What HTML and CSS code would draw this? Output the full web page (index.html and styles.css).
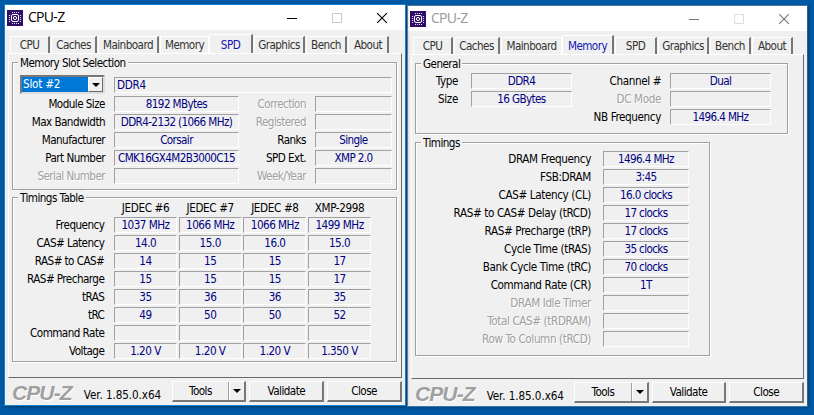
FILE: index.html
```
<!DOCTYPE html>
<html lang="en">
<head>
    <meta charset="UTF-8" />
    <meta name="viewport" content="width=device-width, initial-scale=1" />
    <title>CPU-Z</title>
    <link rel="stylesheet" href="styles.css">
</head>
<body>
    <svg width="0" height="0" class="defs">
        <symbol id="chip" viewBox="0 0 16 16">
            <rect width="16" height="16" fill="#2e0d68" />
            <path d="M5 2.5h7M5 13.5h7M2.5 5v7M13.5 5v7" stroke="#e4def0" stroke-width="1.2" stroke-dasharray="1 1" fill="none" />
            <rect x="4.5" y="4.5" width="7" height="7" rx="1.5" fill="none" stroke="#fff" />
            <circle cx="8" cy="8" r="1.6" fill="none" stroke="#fff" />
        </symbol>
        <symbol id="min" viewBox="0 0 10 10"><path d="M0 5.5h10" stroke="currentColor" /></symbol>
        <symbol id="max" viewBox="0 0 10 10"><path d="M.5 .5h9v9h-9z" stroke="currentColor" fill="none" /></symbol>
        <symbol id="close" viewBox="0 0 10 10"><path d="M0 0L10 10M10 0L0 10" stroke="currentColor" stroke-width="1.1" /></symbol>
    </svg>

    <div class="window spd-window">
        <header class="titlebar">
            <svg class="app-icon"><use href="#chip" /></svg>
            <h1>CPU-Z</h1>
            <svg class="ctl"><use href="#min" /></svg>
            <svg class="ctl off"><use href="#max" /></svg>
            <svg class="ctl"><use href="#close" /></svg>
        </header>
        <nav class="tabs">
            <span class="tab">CPU</span><span class="tab">Caches</span><span class="tab">Mainboard</span><span class="tab last-before">Memory</span><span class="tab active">SPD</span><span class="tab">Graphics</span><span class="tab">Bench</span><span class="tab">About</span>
        </nav>
        <main class="panel">
            <section class="group slot">
                <h2>Memory Slot Selection</h2>
                <div class="slot-row">
                    <div class="select"><span>Slot #2</span><i class="drop"></i></div>
                    <div class="field left">DDR4</div>
                </div>
                <div class="slot-grid">
                    <label>Module Size</label><div class="field">8192 MBytes</div><label class="off">Correction</label><div class="field"></div>
                    <label>Max Bandwidth</label><div class="field">DDR4-2132 (1066 MHz)</div><label class="off">Registered</label><div class="field"></div>
                    <label>Manufacturer</label><div class="field">Corsair</div><label>Ranks</label><div class="field">Single</div>
                    <label>Part Number</label><div class="field">CMK16GX4M2B3000C15</div><label>SPD Ext.</label><div class="field">XMP 2.0</div>
                    <label class="off">Serial Number</label><div class="field"></div><label class="off">Week/Year</label><div class="field"></div>
                </div>
            </section>
            <section class="group table">
                <h2>Timings Table</h2>
                <div class="timing-grid">
                    <span></span><b>JEDEC #6</b><b>JEDEC #7</b><b>JEDEC #8</b><b>XMP-2998</b>
                    <label>Frequency</label><div class="field">1037 MHz</div><div class="field">1066 MHz</div><div class="field">1066 MHz</div><div class="field">1499 MHz</div>
                    <label>CAS# Latency</label><div class="field">14.0</div><div class="field">15.0</div><div class="field">16.0</div><div class="field">15.0</div>
                    <label>RAS# to CAS#</label><div class="field">14</div><div class="field">15</div><div class="field">15</div><div class="field">17</div>
                    <label>RAS# Precharge</label><div class="field">15</div><div class="field">15</div><div class="field">15</div><div class="field">17</div>
                    <label>tRAS</label><div class="field">35</div><div class="field">36</div><div class="field">36</div><div class="field">35</div>
                    <label>tRC</label><div class="field">49</div><div class="field">50</div><div class="field">50</div><div class="field">52</div>
                    <label>Command Rate</label><div class="field"></div><div class="field"></div><div class="field"></div><div class="field"></div>
                    <label>Voltage</label><div class="field">1.20 V</div><div class="field">1.20 V</div><div class="field">1.20 V</div><div class="field">1.350 V</div>
                </div>
            </section>
        </main>
        <footer>
            <strong class="logo">CPU-Z</strong>
            <span class="version">Ver. 1.85.0.x64</span>
            <div class="button split"><span>Tools</span><i class="drop"></i></div>
            <div class="button">Validate</div>
            <div class="button">Close</div>
        </footer>
    </div>

    <div class="window memory-window">
        <header class="titlebar">
            <svg class="app-icon"><use href="#chip" /></svg>
            <h1>CPU-Z</h1>
            <svg class="ctl"><use href="#min" /></svg>
            <svg class="ctl off"><use href="#max" /></svg>
            <svg class="ctl"><use href="#close" /></svg>
        </header>
        <nav class="tabs">
            <span class="tab">CPU</span><span class="tab">Caches</span><span class="tab last-before">Mainboard</span><span class="tab active">Memory</span><span class="tab">SPD</span><span class="tab">Graphics</span><span class="tab">Bench</span><span class="tab">About</span>
        </nav>
        <main class="panel">
            <section class="group general">
                <h2>General</h2>
                <div class="general-grid">
                    <label class="first">Type</label><div class="field">DDR4</div><label>Channel #</label><div class="field">Dual</div>
                    <label class="first">Size</label><div class="field">16 GBytes</div><label class="off">DC Mode</label><div class="field"></div>
                    <label class="nb">NB Frequency</label><div class="field">1496.4 MHz</div>
                </div>
            </section>
            <section class="group timings">
                <h2>Timings</h2>
                <div class="clock-grid">
                    <label>DRAM Frequency</label><div class="field">1496.4 MHz</div>
                    <label>FSB:DRAM</label><div class="field">3:45</div>
                    <label>CAS# Latency (CL)</label><div class="field">16.0 clocks</div>
                    <label>RAS# to CAS# Delay (tRCD)</label><div class="field">17 clocks</div>
                    <label>RAS# Precharge (tRP)</label><div class="field">17 clocks</div>
                    <label>Cycle Time (tRAS)</label><div class="field">35 clocks</div>
                    <label>Bank Cycle Time (tRC)</label><div class="field">70 clocks</div>
                    <label>Command Rate (CR)</label><div class="field">1T</div>
                    <label class="off">DRAM Idle Timer</label><div class="field"></div>
                    <label class="off">Total CAS# (tRDRAM)</label><div class="field"></div>
                    <label class="off">Row To Column (tRCD)</label><div class="field"></div>
                </div>
            </section>
        </main>
        <footer>
            <strong class="logo">CPU-Z</strong>
            <span class="version">Ver. 1.85.0.x64</span>
            <div class="button split"><span>Tools</span><i class="drop"></i></div>
            <div class="button">Validate</div>
            <div class="button">Close</div>
        </footer>
    </div>
</body>
</html>
```
FILE: styles.css
```
* { box-sizing: border-box; }
body { margin: 0; height: 415px; overflow: hidden; background: #0059a5; color: #000; font: 11.6px/14px "DejaVu Sans Condensed", "DejaVu Sans", sans-serif; font-stretch: condensed; letter-spacing: -0.55px; }
h1, h2 { margin: 0; font-weight: normal; }
.defs { position: absolute; }

.window { position: absolute; width: 402px; height: 402px; background: #f0f0f0; border: 1px solid #1883d0; display: flex; flex-direction: column; }
.spd-window { left: 4px; top: 4px; z-index: 2; box-shadow: 1px 1px 3px rgba(0,0,0,0.4); }
.memory-window { left: 407px; top: 5px; width: 401px; border-color: #4b7ba5 #2f618c #2f7bb5 #7797b3; box-shadow: 1px 1px 3px rgba(0,0,0,0.3); }

.titlebar { height: 25px; flex: none; background: #fff; display: flex; align-items: center; padding: 0 18px 0 2px; }
.app-icon { width: 16px; height: 16px; }
.titlebar h1 { flex: 1; margin-left: 5px; font: 14px/20px "Open Sans", sans-serif; letter-spacing: -0.7px; padding-bottom: 2px; }
.ctl { width: 10px; height: 10px; margin-left: 35px; }
.ctl.off { color: #c8c8c8; }
.memory-window h1 { color: #999; }
.memory-window .ctl { color: #777; }
.memory-window .ctl.off { color: #ddd; }

.tabs { display: flex; align-items: flex-end; height: 23px; padding: 0 0 0 5px; flex: none; }
.tab { height: 17px; padding-top: 1px; text-align: center; color: #333; border: 1px solid #fff; border-bottom: 0; border-right: 2px solid #777; margin-right: 1px; }
.tab:nth-child(1) { width: 40px; }
.tab:nth-child(2) { width: 46px; }
.tab:nth-child(3) { width: 61px; }
.tab:nth-child(4) { width: 49px; }
.tab:nth-child(5) { width: 42px; }
.tab:nth-child(6) { width: 51px; }
.tab:nth-child(7) { width: 41px; }
.tab:nth-child(8) { width: 41px; }
.tab.last-before { border-right: 1px solid #fff; margin-right: 0; }
.tab.active { height: 20px; margin-bottom: -1px; padding-top: 3px; background: #f0f0f0; color: #1515b5; width: 44px; }
.memory-window .tab.active { width: 52px; }

.panel { height: 325px; flex: none; margin: 0 3px; padding: 8px 4px 0 3px; border: 1px solid #fff; border-right: 1px solid #696969; border-bottom: 1px solid #696969; }
.group { border: 1px solid #a0a0a0; box-shadow: 1px 1px 0 #fff, inset 1px 1px 0 #fff; margin-bottom: 7px; }
.group h2 { width: fit-content; margin: -8px 0 0 5px; padding: 0 2px; background: #f0f0f0; font-size: 11.6px; line-height: 16px; }
.slot { height: 128px; padding: 0 3px 0 7px; }
.group.slot h2 { margin-left: -2px; }
.table { height: 165px; }

label { text-align: right; white-space: nowrap; line-height: 17px; height: 16px; }
label.off { color: #a0a0a0; text-shadow: 1px 1px 0 #fff; }
.field { height: 16px; border: 1px solid #fff; border-top-color: #a0a0a0; border-left-color: #a0a0a0; color: #000080; text-align: center; white-space: nowrap; line-height: 14px; letter-spacing: -0.62px; }
.field.left { text-align: left; padding-left: 2px; letter-spacing: -0.3px; }

.slot-row { display: grid; grid-template-columns: 85px 278px; gap: 9px; padding-top: 4px; height: 23px; align-items: center; }
.select { height: 19px; display: flex; background: #fff; border: 2px solid #696969; border-color: #777 #ddd #ddd #777; letter-spacing: -0.2px; }
.select span { flex: 1; background: #0078d7; color: #fff; padding-left: 1px; line-height: 15px; }
.select .drop { width: 15px; background: #f0f0f0; border: 1px solid #fff; border-right-color: #696969; border-bottom-color: #696969; }
.drop { display: flex; align-items: center; justify-content: center; }
.drop::after { content: ""; border: 4px solid transparent; border-top-color: #000; border-bottom: 0; }
.slot-grid { display: grid; grid-template-columns: 84px 125px 58px 77px; column-gap: 9px; row-gap: 2px; margin-top: 2px; padding-left: 1px; }

.timing-grid { display: grid; grid-template-columns: 99px repeat(4, 63px); gap: 2px 1.7px; padding-left: 0.3px; }
.timing-grid label { padding-right: 8px; }
.timing-grid .field { letter-spacing: -0.5px; }
.timing-grid b { font-weight: normal; text-align: center; line-height: 5px; height: 9px; letter-spacing: -0.35px; }

.general { width: 373px; height: 71px; margin-bottom: 8px; }
.general-grid { display: grid; grid-template-columns: 46px 101px 80px 101px; column-gap: 9px; row-gap: 2px; padding-top: 1px; grid-auto-rows: 16px; }
.general-grid .first { padding-right: 4px; }
.general-grid .nb { grid-column: 3; margin-left: -4px; }
.timings { width: 295px; height: 214px; }
.clock-grid { display: grid; grid-template-columns: 175px 86px; column-gap: 12px; row-gap: 2px; }
.memory-window label { letter-spacing: -0.38px; }

footer { display: flex; flex: 1; padding: 3px 3px 0 7px; }
.logo { width: 71px; color: #a0a0a0; font: italic bold 21px/23px "Liberation Sans", sans-serif; letter-spacing: -0.9px; text-shadow: 1px 1px 0 #fff; }
.version { width: 89px; padding: 7px 0 0 1px; letter-spacing: -0.08px; white-space: nowrap; }
.button { width: 75px; height: 21px; margin-right: 3px; text-align: center; line-height: 18px; border: 1px solid #fff; border-right: 2px solid #777; border-bottom: 2px solid #777; }
.button:last-child { margin-right: 0; }
.split { display: flex; }
.split span { flex: 1; border-right: 1px solid #a0a0a0; }
.split .drop { width: 15px; border-left: 1px solid #fff; }
```
